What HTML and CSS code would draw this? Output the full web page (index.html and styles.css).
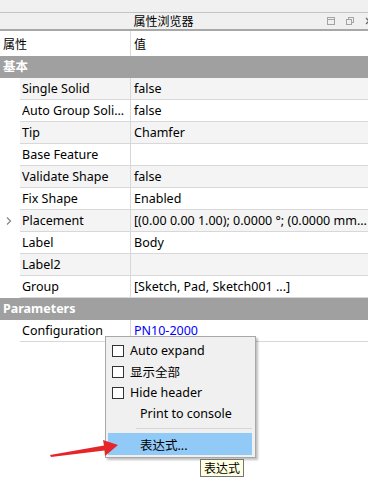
FILE: index.html
```html
<!DOCTYPE html>
<html>
  <head>
    <title>属性浏览器</title>
    <link rel="stylesheet" href="styles.css">
  </head>
  <body>
    <div class="topGap"></div>
    <div class="titleBar">
      <span class="titleText">属性浏览器</span>
      <span class="titleBtns">
        <svg width="8" height="8" viewBox="0 0 8 8"><rect x="0.5" y="0.5" width="7" height="7" fill="none" stroke="#a4a4a4"/><line x1="0.5" y1="2.5" x2="7.5" y2="2.5" stroke="#a4a4a4"/></svg>
        <svg width="8" height="8" viewBox="0 0 8 8"><rect x="2.5" y="0.5" width="5" height="5" fill="none" stroke="#a4a4a4"/><rect x="0.5" y="2.5" width="5" height="5" fill="#f0f0f0" stroke="#a4a4a4"/></svg>
        <svg width="8" height="8" viewBox="0 0 8 8"><path d="M1 1 L7 7 M7 1 L1 7" stroke="#6a6a6a" stroke-width="1.3"/></svg>
      </span>
    </div>
    <div class="headRow">
      <span class="headName">属性</span>
      <span class="headValue">值</span>
    </div>
    <div class="group">基本</div>
    <div class="row alt"><span class="gutter"></span><span class="name">Single Solid</span><span class="value">false</span></div>
    <div class="row"><span class="gutter"></span><span class="name">Auto Group Soli...</span><span class="value">false</span></div>
    <div class="row alt"><span class="gutter"></span><span class="name">Tip</span><span class="value">Chamfer</span></div>
    <div class="row"><span class="gutter"></span><span class="name">Base Feature</span><span class="value"></span></div>
    <div class="row alt"><span class="gutter"></span><span class="name">Validate Shape</span><span class="value">false</span></div>
    <div class="row"><span class="gutter"></span><span class="name">Fix Shape</span><span class="value">Enabled</span></div>
    <div class="row alt"><span class="gutter"><svg width="8" height="10" viewBox="0 0 8 10"><path d="M2 1.5 L5.5 5 L2 8.5" fill="none" stroke="#8a8a8a" stroke-width="1.3"/></svg></span><span class="name">Placement</span><span class="value">[(0.00 0.00 1.00); 0.0000 °; (0.0000 mm...</span></div>
    <div class="row"><span class="gutter"></span><span class="name">Label</span><span class="value">Body</span></div>
    <div class="row alt"><span class="gutter"></span><span class="name">Label2</span><span class="value"></span></div>
    <div class="row"><span class="gutter"></span><span class="name">Group</span><span class="value">[Sketch, Pad, Sketch001 ...]</span></div>
    <div class="group">Parameters</div>
    <div class="row"><span class="gutter"></span><span class="name">Configuration</span><span class="value link">PN10-2000</span></div>

    <div class="menu">
      <div class="item"><span class="check"></span>Auto expand</div>
      <div class="item"><span class="check"></span>显示全部</div>
      <div class="item"><span class="check"></span>Hide header</div>
      <div class="item plain">Print to console</div>
      <div class="sep"></div>
      <div class="item plain active">表达式...</div>
    </div>
    <div class="tip">表达式</div>
    <svg class="arrow" width="80" height="30" viewBox="0 0 80 30">
      <polygon points="0,21 54,11.5 53,6 68,11 55,22 54.5,16.5 1,23" fill="#e4262b"/>
    </svg>
  </body>
</html>
```

FILE: styles.css
```css
body {
  margin: 0;
  width: 368px;
  height: 486px;
  overflow: hidden;
  background: #ffffff;
  font-family: "Noto Sans", "Noto Sans CJK SC", sans-serif;
  font-size: 12.5px;
  color: #000000;
  position: relative;
}
.topGap {
  height: 12px;
  background: #f0f0f0;
  border-bottom: 1px solid #c4c4c4;
}
.titleBar {
  height: 16px;
  background: #f0f0f0;
  border-bottom: 2px solid #a8a8a8;
  display: flex;
  align-items: center;
}
.titleText {
  flex: 1;
  text-align: center;
  font-family: "Noto Sans CJK SC", sans-serif;
  font-size: 12px;
  line-height: 16px;
}
.titleBtns {
  width: 41px;
  flex-shrink: 0;
  display: flex;
  align-items: center;
  gap: 11px;
}
.titleBtns svg {
  flex-shrink: 0;
}
.headRow {
  height: 25px;
  display: grid;
  grid-template-columns: 131px 1fr;
  font-family: "Noto Sans CJK SC", sans-serif;
  font-size: 12px;
  line-height: 25px;
}
.headName {
  padding-left: 3px;
  border-right: 1px solid #dcdcdc;
}
.headValue {
  padding-left: 3px;
}
.group {
  height: 22px;
  line-height: 22px;
  background: #a0a0a0;
  color: #ffffff;
  font-weight: bold;
  padding-left: 3px;
}
.row {
  height: 22px;
  display: grid;
  grid-template-columns: 20px 111px 1fr;
  white-space: nowrap;
  overflow: hidden;
}
.gutter {
  display: flex;
  align-items: center;
  justify-content: center;
  padding-right: 2px;
}
.name, .value {
  border-bottom: 1px solid #d8d8d8;
  line-height: 21px;
  overflow: hidden;
}
.name {
  padding-left: 2px;
  border-right: 1px solid #d8d8d8;
}
.value {
  padding-left: 3px;
}
.row.alt .name, .row.alt .value {
  background: #f4f4f4;
}
.value.link {
  color: #0000ff;
}
.menu {
  position: absolute;
  left: 105px;
  top: 336px;
  width: 144px;
  padding: 3px 3px 2px 2px;
  background: #f0f0f0;
  border: 1px solid #a8a8a8;
  box-shadow: 2px 2px 2px rgba(0, 0, 0, 0.25);
}
.item {
  height: 21px;
  display: flex;
  align-items: center;
  padding-left: 4px;
  white-space: nowrap;
}
.check {
  width: 10px;
  height: 10px;
  border: 1px solid #333333;
  background: #ffffff;
  margin-right: 6px;
}
.item.plain {
  padding-left: 32px;
}
.item.active {
  height: 22px;
  background: #91c9f7;
}
.sep {
  height: 9px;
  display: flex;
  align-items: center;
  padding-left: 28px;
}
.sep::after {
  content: "";
  flex: 1;
  border-top: 1px solid #d6d6d6;
}
.tip {
  position: absolute;
  left: 200px;
  top: 459px;
  height: 16px;
  line-height: 16px;
  padding: 0 3px;
  background: #ffffe1;
  border: 1px solid #767676;
  font-family: "Noto Sans CJK SC", sans-serif;
  font-size: 12px;
}
.arrow {
  position: absolute;
  left: 50px;
  top: 434px;
}
```
